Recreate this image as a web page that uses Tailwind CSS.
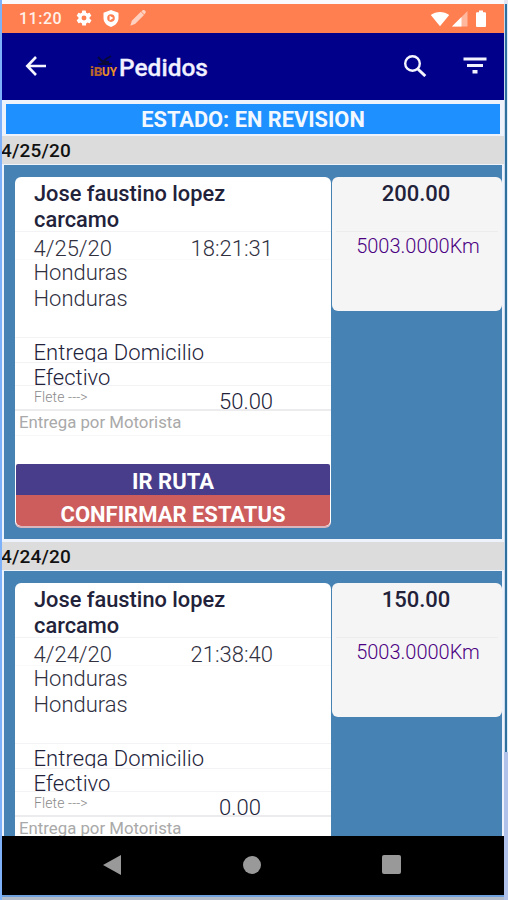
<!DOCTYPE html>
<html lang="es">
<head>
<meta charset="utf-8">
<title>Pedidos</title>
<script src="https://cdn.jsdelivr.net/npm/@tailwindcss/browser@4"></script>
</head>
<body class="w-[508px] h-[900px] overflow-hidden bg-[#a9c3ec] font-['Roboto',sans-serif] text-[#22223a]">
<div class="flex h-[900px] w-[508px]">
  <div class="w-[2px] bg-[#7db1fa]"></div>
  <div class="flex h-[900px] w-[502px] flex-col bg-[#eef2fb]">
    <div class="h-[4px] shrink-0 bg-[#fafafd]"></div>
    <!-- Status bar -->
    <div class="flex h-[29px] shrink-0 items-center bg-[#ff7f50] pl-[17px] pr-[18px] text-[#fff1ea]">
      <span class="w-[56px] whitespace-nowrap text-[16px] font-medium leading-[28px] tracking-[0.5px]">11:20</span>
      <svg class="mb-px h-[18px] w-[18px]" viewBox="0 0 24 24" fill="#fff"><path fill-rule="evenodd" d="M19.4 13a7.500 7.500 0 0 0 0-2l2.100-1.600c.2-.2.300-.4.100-.7l-2-3.400c-.1-.2-.4-.3-.6-.2l-2.500 1a7 7 0 0 0-1.700-1l-.4-2.600a.5.500 0 0 0-.5-.5h-4a.5.500 0 0 0-.5.500L9.200 5.100a7 7 0 0 0-1.700 1L5 5.100c-.2-.1-.5 0-.6.200l-2 3.400c-.1.200-.1.500.1.700L4.600 11a7.500 7.500 0 0 0 0 2l-2.100 1.600c-.2.200-.3.400-.1.700l2 3.400c.1.200.4.300.6.200l2.500-1a7 7 0 0 0 1.700 1l.4 2.600c0 .3.200.5.500.5h4c.3 0 .5-.2.500-.5l.4-2.600a7 7 0 0 0 1.700-1l2.500 1c.2.100.5 0 .6-.2l2-3.400c.1-.2.100-.5-.1-.7zM12 15.300a3.300 3.300 0 1 1 0-6.600 3.300 3.300 0 0 1 0 6.600z"/></svg>
      <svg class="ml-[9px] mb-px h-[19px] w-[18px]" viewBox="0 0 18 19" fill="#fff"><path fill-rule="evenodd" d="M9 1 16.500 3.800V9c0 4.300-3 7.500-7.500 9C4.500 16.500 1.500 13.300 1.500 9V3.800zM9 5.300a3.800 3.800 0 1 0 0 7.600 3.800 3.800 0 0 0 0-7.600zM7.600 6.800 11.400 9.100 7.600 11.400z"/></svg>
      <svg class="ml-[9px] mb-px h-[18px] w-[18px]" viewBox="0 0 18 18" fill="#ffd0bf"><path d="M1.300 16.700 2.800 11.800 11.800 2.800 15 6 6 15zM12.400 2.400 13.600 1.300C14.400.7 15.400.8 16.100 1.500 16.900 2.300 17 3.400 16.300 4.200L15.400 5.400z"/></svg>
      <svg class="ml-auto h-[16px] w-[20px]" viewBox="0 0 20 16" fill="#fff"><path d="M.8 4C6-.1 14-.1 19.200 4L10 15.200z"/></svg>
      <svg class="ml-[2px] h-[16px] w-[16px]" viewBox="0 0 16 16"><path d="M0 15.500 15.500 0V15.500z" fill="#ffb79e"/><path d="M0 15.500 9.500 6V15.500z" fill="#fff"/></svg>
      <svg class="ml-[8px] h-[17px] w-[10px]" viewBox="0 0 10 17" fill="#fff"><path d="M3 .5h4v1.700h2q1 0 1 1V16q0 1-1 1H1q-1 0-1-1V3.200q0-1 1-1h2z"/></svg>
    </div>
    <!-- App bar -->
    <div class="flex h-[67px] shrink-0 items-center bg-[#00008b] pl-[23px] pr-[17px] text-[#f0f0ff]">
      <svg class="mb-[2px] h-[20px] w-[22px]" viewBox="0 0 22 20" fill="none" stroke="#f5f5ff" stroke-width="2.600"><path d="M21 10H3M11 1 2.300 10 11 19"/></svg>
      <svg class="ml-[42px] mb-px h-[24px] w-[29px]" viewBox="0 0 29 24"><path d="M9 3l5 5h6M13 9l4-4 5-3M9 10h14" stroke="#08083a" stroke-width="1.800" fill="none"/><text x="1" y="21.500" font-family="Roboto" font-size="12" font-weight="900" fill="#b5632e" textLength="12.500" lengthAdjust="spacingAndGlyphs">iB</text><text x="13" y="21.500" font-family="Roboto" font-size="12" font-weight="700" fill="#ea8f28" textLength="15" lengthAdjust="spacingAndGlyphs">UY</text></svg>
      <span class="pl-px pt-[2px] text-[24.500px] font-medium leading-[30px] [-webkit-text-stroke:0.3px_#f0f0ff]">Pedidos</span>
      <svg class="ml-auto mb-[2px] h-[22px] w-[24px]" viewBox="0 0 24 22" fill="none" stroke="#f5f5ff"><circle cx="9.500" cy="8.500" r="7.300" stroke-width="2.400"/><path d="m14.300 13.500 8 7.500" stroke-width="3"/></svg>
      <svg class="ml-[36px] mb-[2px] h-[17px] w-[24px]" viewBox="0 0 24 17" fill="#f2f2ff"><path d="M.5.500h23v3H.5zM4 7h16v3H4zM9.500 13h5v3.500h-5z"/></svg>
    </div>
    <!-- Order list -->
    <div class="min-h-0 flex-1 overflow-hidden">
      <div class="px-[4px] pb-[2px] pt-[4px]"><div class="h-[30px] w-[494px] bg-[#1e90ff] text-center text-[21.800px] font-bold leading-[31px] text-[#f3f8ff]">ESTADO: EN REVISION</div></div>

      <div class="h-[28px] bg-[#dcdcdc] text-[19px] font-medium leading-[29px] tracking-[0.150px] text-[#111]"><span class="-ml-px">4/25/20</span></div>
      <div class="h-[378px] pb-[3px] pl-[2px] pr-[2px] pt-px">
        <div class="flex h-[374px] items-start bg-[#4682b4] pl-[11px] pt-[12px]">
          <div class="h-[351px] w-[316px] overflow-hidden rounded-[6px] border-b-2 border-[#d8b4bd] bg-white text-[22px]">
            <div class="h-[55px] border-b border-[#f3f3f5] pl-[19px] pt-[4px] text-[21.800px] font-medium leading-[25.500px]">Jose faustino lopez<br>carcamo</div>
            <div class="flex h-[28px] border-b border-[#fafafa] pl-[18.500px] font-light leading-[33px] text-[#30303f]"><span class="w-[157px]">4/25/20</span><span>18:21:31</span></div>
            <div class="h-[78px] border-b border-[#f3f3f5] pl-[18.500px] font-light leading-[25.500px] text-[#30303f]">Honduras<br>Honduras</div>
            <div class="h-[25px] overflow-hidden border-b border-[#f3f3f5] pl-[18.500px] font-light leading-[30px] tracking-[0.080px]">Entrega Domicilio</div>
            <div class="h-[23px] border-b border-[#f3f3f5] pl-[18.500px] font-light leading-[29px]">Efectivo</div>
            <div class="flex h-[25px] border-b-2 border-[#ececee] pl-[19px] font-light"><span class="w-[185px] text-[14px] leading-[22px] tracking-[0.100px] text-[#8c8c8c]">Flete ---&gt;</span><span class="leading-[32px]">50.00</span></div>
            <div class="h-[25px] border-b border-[#f7f7f7] pl-[4px] text-[16.800px] leading-[23px] text-[#a9a9a9]">Entrega por Motorista</div>
            <div class="h-[28px]"></div>
            <div class="mx-px h-[31px] rounded-t-[2px] bg-[#483d8b] text-center text-[22px] font-bold leading-[36px] text-white">IR RUTA</div>
            <div class="mx-px h-[31px] rounded-b-[5px] bg-[#cd5c5c] text-center text-[22px] font-bold leading-[40px] text-white">CONFIRMAR ESTATUS</div>
          </div>
          <div class="ml-px h-[134px] w-[170px] rounded-[6px] bg-[#f5f5f5] text-center text-[22px]">
            <div class="mx-[4px] h-[55px] border-b border-[#ececec] pr-[2px] font-medium leading-[34px]">200.00</div>
            <div class="pl-[2px] pt-[1px] text-[20px] font-light leading-[27px] text-[#4b0082]">5003.0000Km</div>
          </div>
        </div>
      </div>

      <div class="h-[28px] bg-[#dcdcdc] text-[19px] font-medium leading-[29px] tracking-[0.150px] text-[#111]"><span class="-ml-px">4/24/20</span></div>
      <div class="h-[378px] pb-[3px] pl-[2px] pr-[2px] pt-px">
        <div class="flex h-[374px] items-start bg-[#4682b4] pl-[11px] pt-[12px]">
          <div class="h-[351px] w-[316px] overflow-hidden rounded-[6px] border-b-2 border-[#d8b4bd] bg-white text-[22px]">
            <div class="h-[55px] border-b border-[#f3f3f5] pl-[19px] pt-[4px] text-[21.800px] font-medium leading-[25.500px]">Jose faustino lopez<br>carcamo</div>
            <div class="flex h-[28px] border-b border-[#fafafa] pl-[18.500px] font-light leading-[33px] text-[#30303f]"><span class="w-[157px]">4/24/20</span><span>21:38:40</span></div>
            <div class="h-[78px] border-b border-[#f3f3f5] pl-[18.500px] font-light leading-[25.500px] text-[#30303f]">Honduras<br>Honduras</div>
            <div class="h-[25px] overflow-hidden border-b border-[#f3f3f5] pl-[18.500px] font-light leading-[30px] tracking-[0.080px]">Entrega Domicilio</div>
            <div class="h-[23px] border-b border-[#f3f3f5] pl-[18.500px] font-light leading-[29px]">Efectivo</div>
            <div class="flex h-[25px] border-b-2 border-[#ececee] pl-[19px] font-light"><span class="w-[185px] text-[14px] leading-[22px] tracking-[0.100px] text-[#8c8c8c]">Flete ---&gt;</span><span class="leading-[32px]">0.00</span></div>
            <div class="h-[25px] border-b border-[#f7f7f7] pl-[4px] text-[16.800px] leading-[23px] text-[#a9a9a9]">Entrega por Motorista</div>
          </div>
          <div class="ml-px h-[134px] w-[170px] rounded-[6px] bg-[#f5f5f5] text-center text-[22px]">
            <div class="mx-[4px] h-[55px] border-b border-[#ececec] pr-[2px] font-medium leading-[34px]">150.00</div>
            <div class="pl-[2px] pt-[1px] text-[20px] font-light leading-[27px] text-[#4b0082]">5003.0000Km</div>
          </div>
        </div>
      </div>
    </div>
    <!-- Navigation bar -->
    <div class="flex h-[59px] shrink-0 items-center bg-black pl-[101px]">
      <svg class="mb-[2px] h-[20px] w-[18px]" viewBox="0 0 18 20" fill="#999"><path d="M18 0V20L0 10z"/></svg>
      <div class="mb-[2px] ml-[122px] size-[18px] rounded-full bg-[#999]"></div>
      <div class="mb-[2px] ml-[121px] size-[19px] rounded-[2px] bg-[#999]"></div>
    </div>
    <div class="h-[2px] shrink-0 bg-[#6fa0dc]"></div>
    <div class="h-[3px] shrink-0 bg-[#b3bccb]"></div>
  </div>
  <div class="flex w-[4px] flex-col">
    <div class="h-[4px] bg-[#e6e6f2]"></div>
    <div class="flex h-[748px]"><div class="w-px bg-[#c9d9ec]"></div><div class="w-[2px] bg-[#2e6f9e]"></div><div class="w-px bg-[#d9ecf8]"></div></div>
    <div class="flex-1 bg-[#b0c1ea]"></div>
  </div>
</div>
</body>
</html>
